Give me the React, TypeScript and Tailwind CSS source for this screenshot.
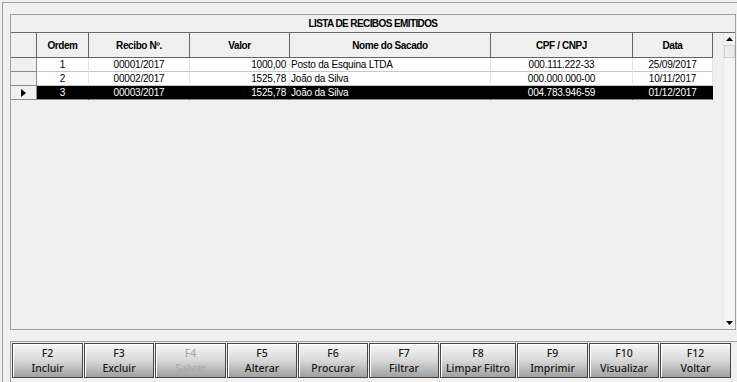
import React from "react";

const cols = [
  { key: "ind", w: "w-[26px]" },
  { key: "ordem", w: "w-[52px]", label: "Ordem", align: "justify-center" },
  { key: "recibo", w: "w-[101px]", label: "Recibo Nº.", align: "justify-center" },
  { key: "valor", w: "w-[100px]", label: "Valor", align: "justify-end pr-[3px]" },
  { key: "nome", w: "w-[201px]", label: "Nome do Sacado", align: "justify-start pl-[1px]" },
  { key: "cpf", w: "w-[142px]", label: "CPF / CNPJ", align: "justify-center" },
  { key: "data", w: "w-[80px]", label: "Data", align: "justify-center" },
];

const rows = [
  { ordem: "1", recibo: "00001/2017", valor: "1000,00", nome: "Posto da Esquina LTDA", cpf: "000.111.222-33", data: "25/09/2017" },
  { ordem: "2", recibo: "00002/2017", valor: "1525,78", nome: "João da Silva", cpf: "000.000.000-00", data: "10/11/2017" },
  { ordem: "3", recibo: "00003/2017", valor: "1525,78", nome: "João da Silva", cpf: "004.783.946-59", data: "01/12/2017", selected: true },
];

const buttons = [
  { k: "F2", l: "Incluir", w: "w-[71px]" },
  { k: "F3", l: "Excluir", w: "w-[70px]" },
  { k: "F4", l: "Salvar", w: "w-[71px]", disabled: true },
  { k: "F5", l: "Alterar", w: "w-[70px]" },
  { k: "F6", l: "Procurar", w: "w-[70px]" },
  { k: "F7", l: "Filtrar", w: "w-[70px]" },
  { k: "F8", l: "Limpar Filtro", w: "w-[76px]" },
  { k: "F9", l: "Imprimir", w: "w-[71px]" },
  { k: "F10", l: "Visualizar", w: "w-[70px]" },
  { k: "F12", l: "Voltar", w: "w-[71px]" },
];

export default function App() {
  return (
    <div
      className="w-[737px] h-[382px] overflow-hidden bg-[#f0f0f0] pl-[2px] pt-[2px]"
      style={{ fontFamily: '"Liberation Sans", Arial, sans-serif' }}
    >
      <div className="h-full border-l border-t border-[#a0a0a0] pl-[7px] pt-[11px] flex flex-col">
        {/* Grid frame */}
        <div className="w-[726px] h-[316px] border border-[#a0a0a0] bg-[#f0f0f0] flex flex-col">
          <div className="h-[18px] border-b border-[#6a6a6a] flex items-center justify-center text-[10px] font-bold tracking-[-0.6px] text-black">
            LISTA DE RECIBOS EMITIDOS
          </div>
          <div className="flex flex-1 min-h-0">
            <div className="w-[702px] flex flex-col">
              {/* Header */}
              <div className="flex h-[25px]">
                {cols.map((c) => (
                  <div
                    key={c.key}
                    className={`${c.w} h-full border-r border-b border-[#646464] flex items-center justify-center text-[10px] font-bold tracking-[-0.4px] text-black`}
                  >
                    {c.label ?? ""}
                  </div>
                ))}
              </div>
              {/* Rows */}
              {rows.map((r, i) => (
                <div key={i} className="flex h-[14px]">
                  <div className="w-[26px] h-full border-r border-b border-[#8c8c8c] bg-[#f0f0f0] flex items-center justify-center">
                    {r.selected ? (
                      <svg width="5" height="8" viewBox="0 0 5 8">
                        <polygon points="0,0 5,4 0,8" fill="#000" />
                      </svg>
                    ) : null}
                  </div>
                  {cols.slice(1).map((c) => (
                    <div
                      key={c.key}
                      className={`${c.w} h-full border-r border-b flex items-center ${c.align} text-[10px] leading-[13px] whitespace-nowrap overflow-hidden tracking-[-0.2px] ${
                        r.selected
                          ? "bg-black text-white border-r-black border-b-[#8c8c8c]"
                          : "bg-white text-black border-r-[#e4e4e4] border-b-[#c8c8c8]"
                      }`}
                    >
                      {(r as any)[c.key]}
                    </div>
                  ))}
                </div>
              ))}
            </div>
            {/* Scrollbar area */}
            <div className="flex-1 flex justify-end">
              <div className="w-[12px] h-full flex flex-col bg-[#f4f4f4] border-l border-[#e8e8e8]">
                <div className="h-[12px] flex items-center justify-center">
                  <svg width="7" height="4" viewBox="0 0 7 4">
                    <polygon points="3.5,0 7,4 0,4" fill="#000" />
                  </svg>
                </div>
                <div className="h-[13px] border border-[#d0d0d0] bg-[#ececec]" />
                <div className="flex-1" />
                <div className="h-[12px] flex items-center justify-center">
                  <svg width="7" height="4" viewBox="0 0 7 4">
                    <polygon points="0,0 7,0 3.5,4" fill="#000" />
                  </svg>
                </div>
              </div>
            </div>
          </div>
        </div>
        {/* Button bar */}
        <div className="mt-[11px] flex-1 border-l border-t border-[#a0a0a0] pl-[1px] pt-[1px]">
          <div className="flex gap-[1px]">
            {buttons.map((b) => (
              <div
                key={b.k}
                className={`${b.w} h-[35px] border border-[#454545] bg-linear-to-b from-[#f7f7f7] via-[#d8d8d8] to-[#a0a0a0] shadow-[inset_1px_1px_0_#ffffff] flex flex-col items-center justify-center text-[10.5px] leading-[15px] font-medium ${
                  b.disabled ? "text-[#a9a9a9]" : "text-[#1a1a1a]"
                }`}
                style={{ fontFamily: '"Noto Sans", "Open Sans", sans-serif' }}
              >
                <span>{b.k}</span>
                <span className="whitespace-nowrap">{b.l}</span>
              </div>
            ))}
          </div>
        </div>
      </div>
    </div>
  );
}
